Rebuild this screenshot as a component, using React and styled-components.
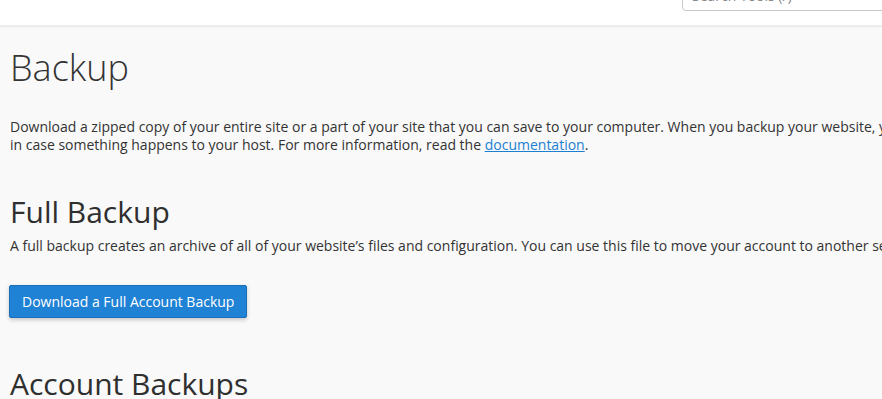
import React from "react";
import styled, { createGlobalStyle } from "styled-components";

const GlobalStyle = createGlobalStyle`
  html, body {
    margin: 0;
    padding: 0;
    background: #f9f9f9;
    font-family: "Open Sans", "Liberation Sans", sans-serif;
    color: #333;
    overflow: hidden;
  }
  * { box-sizing: border-box; }
`;

const TopBar = styled.header`
  display: flex;
  justify-content: flex-end;
  align-items: flex-end;
  height: 26px;
  background: #fff;
  overflow: hidden;
  box-shadow: 0 1px 2px rgba(0, 0, 0, 0.07);
  border-bottom: 1px solid #ececec;
`;

const SearchInput = styled.input`
  width: 210px;
  height: 32px;
  margin: 0 -10px 14px 0;
  padding: 5px 9px;
  border: 1px solid #c7c7cc;
  border-radius: 4px;
  font-family: inherit;
  font-size: 14px;
  line-height: 20px;
  background: #fff;
  &::placeholder { color: #888; }
`;

const Content = styled.main`
  padding: 0 10px;
  overflow: hidden;
`;

const Title = styled.h1`
  margin: 22px 0 0;
  font-size: 36px;
  font-weight: 300;
  line-height: 1.1;
`;

const Heading = styled.h2`
  margin: ${(p) => p.$top}px 0 0;
  font-size: 30px;
  font-weight: 500;
  line-height: 1.1;
  color: #2f2f2f;
  white-space: nowrap;
`;

const Text = styled.p`
  margin: ${(p) => p.$top}px 0 0;
  font-size: 14px;
  line-height: 18px;
  white-space: nowrap;
`;

const DocLink = styled.a`
  color: #1b7fd3;
  text-decoration: underline;
`;

const PrimaryButton = styled.button`
  display: block;
  margin: 30px 0 0 -1px;
  height: 33px;
  padding: 0 12px;
  border: 1px solid #1a6fb8;
  border-radius: 2px;
  background: #1f82d5;
  color: #fff;
  font-family: inherit;
  font-size: 14px;
  box-shadow: 0 2px 4px rgba(0, 0, 0, 0.2);
  cursor: pointer;
`;

export default function App() {
  return (
    <>
      <GlobalStyle />
      <TopBar>
        <SearchInput placeholder="Search Tools (/)" />
      </TopBar>
      <Content>
        <Title>Backup</Title>
        <Text $top={30}>
          Download a zipped copy of your entire site or a part of your site that you can save to your computer. When you backup your website, you have an extra copy of your information
          <br />
          in case something happens to your host. For more information, read the <DocLink href="#">documentation</DocLink>.
        </Text>
        <Heading $top={41}>Full Backup</Heading>
        <Text $top={9}>
          A full backup creates an archive of all of your website’s files and configuration. You can use this file to move your account to another server or to keep a local copy of your files.
        </Text>
        <PrimaryButton>Download a Full Account Backup</PrimaryButton>
        <Heading $top={49}>Account Backups</Heading>
      </Content>
    </>
  );
}
